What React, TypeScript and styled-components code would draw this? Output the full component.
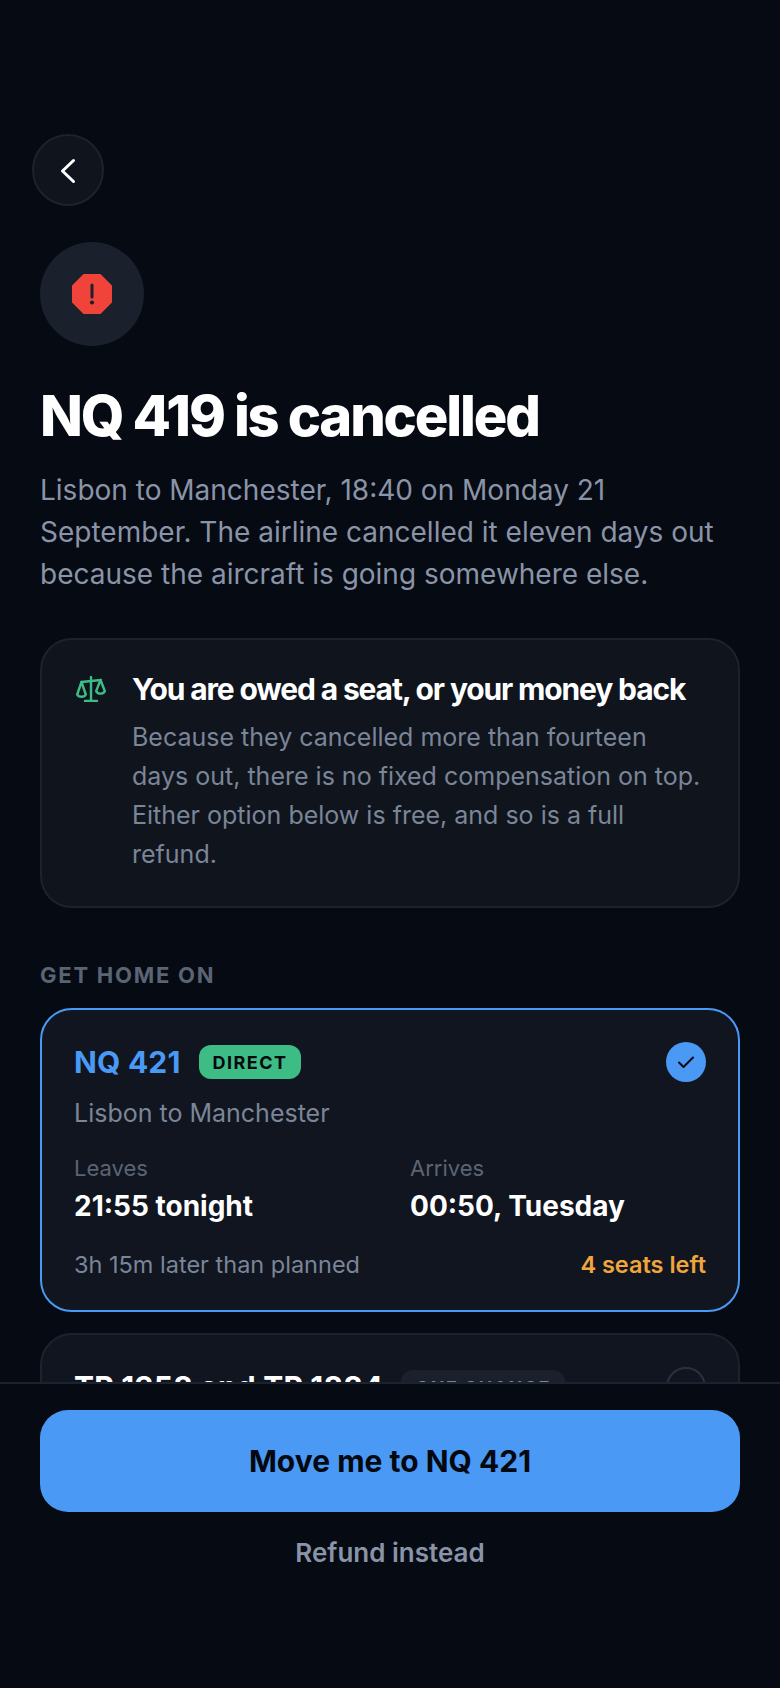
import styled, { createGlobalStyle } from 'styled-components';

const GlobalStyle = createGlobalStyle`
  * { box-sizing: border-box; }
  html, body { margin: 0; padding: 0; background: #060a12; }
  body { font-family: Inter, "Liberation Sans", sans-serif; }
`;

const Page = styled.div`
  width: 780px;
  height: 1688px;
  display: flex;
  flex-direction: column;
  background: #060a12;
  color: #fff;
  overflow: hidden;
`;

const Scroll = styled.main`
  flex: 1;
  min-height: 0;
  overflow: hidden;
  padding: 134px 40px 0;
`;

const BackButton = styled.button`
  width: 72px;
  height: 72px;
  margin-left: -8px;
  padding: 0;
  display: flex;
  align-items: center;
  justify-content: center;
  border-radius: 50%;
  border: 2px solid #1c232f;
  background: #0f141d;
  color: #fff;
`;

const AlertBadge = styled.div`
  width: 104px;
  height: 104px;
  margin-top: 36px;
  display: flex;
  align-items: center;
  justify-content: center;
  border-radius: 50%;
  background: #1a212c;
`;

const Title = styled.h1`
  margin: 36px 0 0;
  font-size: 56px;
  line-height: 68px;
  font-weight: 800;
  letter-spacing: -2.15px;
  color: #fff;
`;

const Lede = styled.p`
  margin: 19px 0 0;
  font-size: 28px;
  line-height: 42px;
  color: #8a94a8;
`;

const Notice = styled.section`
  margin-top: 43px;
  height: 270px;
  padding: 30px 34px;
  display: flex;
  gap: 26px;
  border-radius: 32px;
  border: 2px solid #1c232f;
  background: #0f141d;
`;

const NoticeIcon = styled.div`
  flex: none;
  width: 30px;
  height: 38px;
  display: flex;
  align-items: center;
  color: #3dbd85;
`;

const NoticeTitle = styled.h2`
  margin: 0;
  font-size: 30px;
  line-height: 38px;
  font-weight: 700;
  letter-spacing: -1.15px;
  color: #fff;
`;

const NoticeText = styled.p`
  margin: 10px 0 0;
  font-size: 25px;
  line-height: 39px;
  color: #7b8598;
`;

const SectionLabel = styled.div`
  margin-top: 53px;
  font-size: 22px;
  line-height: 28px;
  font-weight: 700;
  letter-spacing: 1.76px;
  color: #5b6474;
`;

const OptionCard = styled.article<{ selected?: boolean }>`
  margin-top: ${p => (p.selected ? '19px' : '21px')};
  padding: 32px 32px 29px;
  border-radius: 32px;
  border: 2px solid ${p => (p.selected ? '#4a99f5' : '#1c232f')};
  background: #10151f;
`;

const OptionHead = styled.div`
  display: flex;
  align-items: center;
  gap: 18px;
  height: 40px;
`;

const Flight = styled.div<{ selected?: boolean }>`
  font-size: 30px;
  line-height: 40px;
  font-weight: 700;
  letter-spacing: 0.2px;
  color: ${p => (p.selected ? '#4a99f5' : '#fff')};
`;

const Tag = styled.span<{ tone: 'green' | 'muted' }>`
  padding: 0 14px;
  height: 34px;
  display: flex;
  align-items: center;
  border-radius: 12px;
  font-size: 18px;
  font-weight: 700;
  letter-spacing: 1.44px;
  background: ${p => (p.tone === 'green' ? '#3dbd85' : '#1a212c')};
  color: ${p => (p.tone === 'green' ? '#05080f' : '#7b8598')};
`;

const Radio = styled.div<{ checked?: boolean }>`
  margin-left: auto;
  width: 40px;
  height: 40px;
  display: flex;
  align-items: center;
  justify-content: center;
  border-radius: 50%;
  background: ${p => (p.checked ? '#4a99f5' : 'transparent')};
  border: ${p => (p.checked ? 'none' : '2px solid #2a3240')};
  color: #05080f;
`;

const Route = styled.div`
  margin-top: 12px;
  font-size: 25px;
  line-height: 38px;
  color: #7b8598;
`;

const Times = styled.div`
  margin-top: 22px;
  display: grid;
  grid-template-columns: 1fr 1fr;
  column-gap: 40px;
`;

const TimeLabel = styled.div`
  font-size: 22px;
  line-height: 28px;
  color: #5b6474;
`;

const TimeValue = styled.div`
  margin-top: 5px;
  font-size: 28px;
  line-height: 38px;
  font-weight: 700;
  color: #fff;
`;

const OptionFoot = styled.div`
  margin-top: 24px;
  display: flex;
  justify-content: space-between;
  align-items: center;
  font-size: 23.5px;
  line-height: 32px;
  color: #7b8598;
`;

const SeatsLeft = styled.span`
  font-weight: 600;
  color: #f0a63c;
`;

const Footer = styled.footer`
  flex: none;
  height: 306px;
  padding: 26px 40px 0;
  border-top: 2px solid #1c232f;
  background: #060a12;
`;

const PrimaryButton = styled.button`
  width: 100%;
  height: 102px;
  border: none;
  border-radius: 28px;
  background: #4a99f5;
  color: #05080f;
  font-family: inherit;
  font-size: 30px;
  font-weight: 700;
`;

const SecondaryButton = styled.button`
  display: block;
  width: 100%;
  margin-top: 20px;
  height: 40px;
  padding: 0;
  border: none;
  background: none;
  color: #8a94a8;
  font-family: inherit;
  font-size: 26px;
  font-weight: 600;
`;

export default function App() {
  return (
    <Page>
      <GlobalStyle />
      <Scroll>
        <BackButton aria-label="Back">
          <svg width="32" height="32" viewBox="0 0 32 32" fill="none" stroke="currentColor" strokeWidth="3" strokeLinecap="round" strokeLinejoin="round">
            <path d="M21.5 6.5 L10.5 17 L21.5 27.5" />
          </svg>
        </BackButton>
        <AlertBadge>
          <svg width="40" height="40" viewBox="0 0 40 40">
            <path d="M12 1 H28 L39 12 V28 L28 39 H12 L1 28 V12 Z" fill="#f0443a" stroke="#f0443a" strokeWidth="2" strokeLinejoin="round" />
            <path d="M20 11 V23" stroke="#1a212c" strokeWidth="3" strokeLinecap="round" />
            <circle cx="20" cy="28.5" r="2.1" fill="#1a212c" />
          </svg>
        </AlertBadge>
        <Title>NQ 419 is cancelled</Title>
        <Lede>Lisbon to Manchester, 18:40 on Monday 21 September. The airline cancelled it eleven days out because the aircraft is going somewhere else.</Lede>
        <Notice>
          <NoticeIcon>
            <svg width="30" height="26" viewBox="0 0 30 26" fill="none" stroke="currentColor" strokeWidth="2.4" strokeLinecap="round" strokeLinejoin="round">
              <path d="M15 1 V24 M9 25 H21 M5.5 6 L25 4" />
              <path d="M5.5 6 L1.2 18.5 C2.5 21.5 8.5 21.5 9.8 18.5 Z" />
              <path d="M24.5 4 L20.2 15 C21.5 18.5 27.5 18.5 28.8 15 Z" />
            </svg>
          </NoticeIcon>
          <div>
            <NoticeTitle>You are owed a seat, or your money back</NoticeTitle>
            <NoticeText>Because they cancelled more than fourteen days out, there is no fixed compensation on top. Either option below is free, and so is a full refund.</NoticeText>
          </div>
        </Notice>
        <SectionLabel>GET HOME ON</SectionLabel>
        <OptionCard selected>
          <OptionHead>
            <Flight selected>NQ 421</Flight>
            <Tag tone="green">DIRECT</Tag>
            <Radio checked>
              <svg width="20" height="20" viewBox="0 0 20 20" fill="none" stroke="currentColor" strokeWidth="2" strokeLinecap="round" strokeLinejoin="round">
                <path d="M3 10.5 L7.5 15 L17 5.5" />
              </svg>
            </Radio>
          </OptionHead>
          <Route>Lisbon to Manchester</Route>
          <Times>
            <div>
              <TimeLabel>Leaves</TimeLabel>
              <TimeValue>21:55 tonight</TimeValue>
            </div>
            <div>
              <TimeLabel>Arrives</TimeLabel>
              <TimeValue>00:50, Tuesday</TimeValue>
            </div>
          </Times>
          <OptionFoot>
            <span>3h 15m later than planned</span>
            <SeatsLeft>4 seats left</SeatsLeft>
          </OptionFoot>
        </OptionCard>
        <OptionCard>
          <OptionHead>
            <Flight>TP 1358 and TP 1884</Flight>
            <Tag tone="muted">ONE CHANGE</Tag>
            <Radio />
          </OptionHead>
        </OptionCard>
      </Scroll>
      <Footer>
        <PrimaryButton>Move me to NQ 421</PrimaryButton>
        <SecondaryButton>Refund instead</SecondaryButton>
      </Footer>
    </Page>
  );
}
